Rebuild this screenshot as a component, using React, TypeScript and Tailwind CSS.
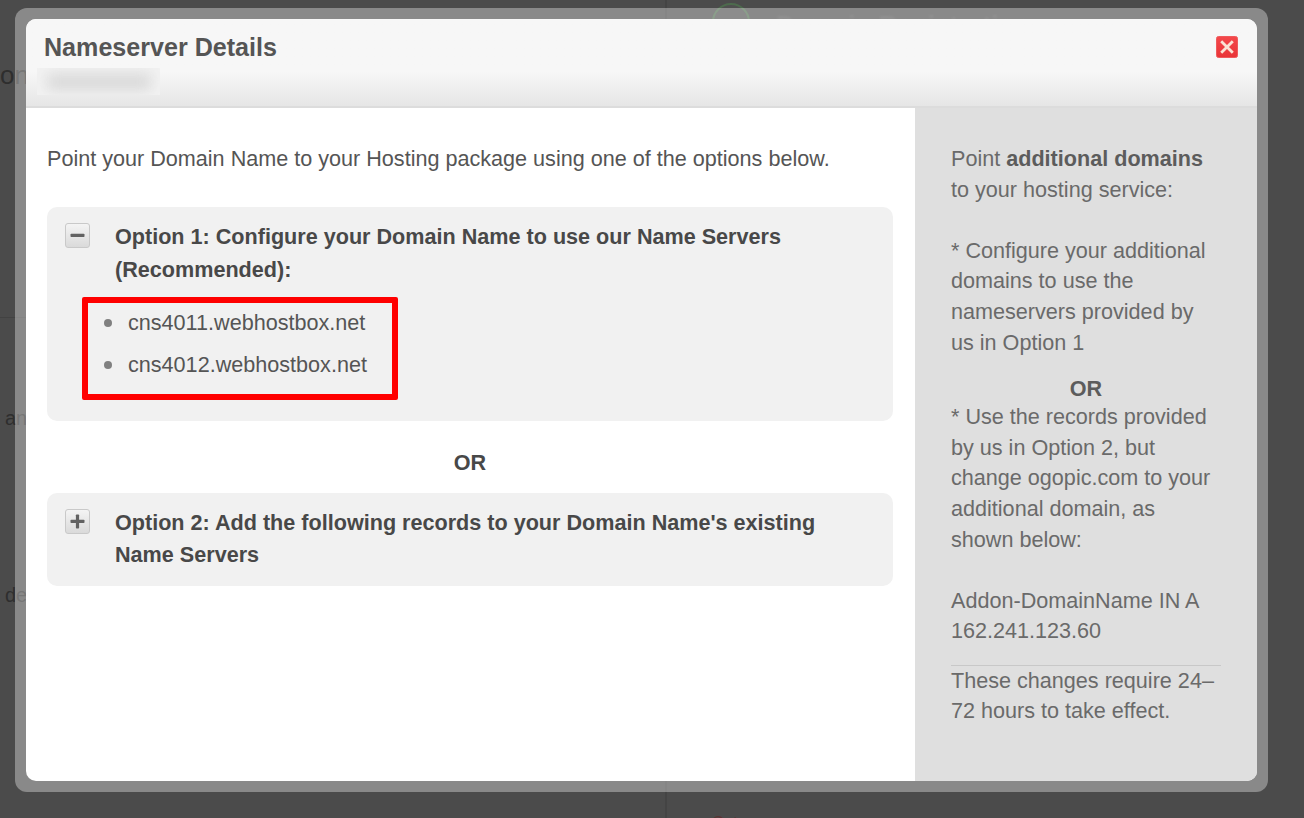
import React from 'react';

const font = { sans: "font-['Liberation_Sans',Arial,sans-serif]" };

function BackgroundPage() {
  return (
    <div className="flex h-[818px] w-full overflow-hidden bg-[#4b4b4b] text-[20px] text-[#2e2e2e]">
      <div className="flex w-[667px] flex-col border-r-2 border-[#444444]">
        <div className="h-[318px] border-b border-[#424242] pt-[61px]">
          <p className="text-[26px] leading-[28px]">on</p>
        </div>
        <p className="mt-[86px] pl-[5px] leading-[28px]">an</p>
        <p className="mt-[149px] pl-[5px] leading-[28px]">de</p>
      </div>
      <div className="flex flex-1 flex-col justify-between pl-[45px]">
        <div className="flex items-start gap-[26px]">
          <div className="mt-[3px] h-[38px] w-[38px] rounded-full border-2 border-[#4d6b4d] bg-[#4f4f4f]" />
          <p className="mt-[10px] text-[26px] font-bold leading-[30px] text-[#555555] blur-[1px]">Domain Registration</p>
        </div>
        <p className="-mb-[13px] text-[16px] leading-[16px] text-[#5a3434]">Get</p>
      </div>
    </div>
  );
}

function ToggleBox({ sign }: { sign: 'minus' | 'plus' }) {
  return (
    <div className="flex h-[25px] w-[25px] shrink-0 items-center justify-center rounded-[3px] border border-[#c9c9c9] bg-gradient-to-b from-[#f4f4f4] to-[#dadada]">
      <svg width="15" height="15" viewBox="0 0 15 15">
        <rect x="0.5" y="5.8" width="14" height="3.2" rx="0.8" fill="#626262" />
        {sign === 'plus' && <rect x="5.9" y="0.5" width="3.2" height="14" rx="0.8" fill="#626262" />}
      </svg>
    </div>
  );
}

function CloseIcon() {
  return (
    <svg width="22" height="22" viewBox="0 0 22 22">
      <defs>
        <linearGradient id="closeRed" x1="0" y1="0" x2="0" y2="1">
          <stop offset="0" stopColor="#f4484b" />
          <stop offset="1" stopColor="#e93437" />
        </linearGradient>
      </defs>
      <rect x="0.5" y="0.5" width="21" height="21" rx="2" fill="url(#closeRed)" stroke="#ef5a5c" />
      <path d="M6.2 6.2 L15.8 15.8 M15.8 6.2 L6.2 15.8" stroke="#fbe3d6" strokeWidth="2.8" strokeLinecap="square" />
    </svg>
  );
}

function Sidebar() {
  return (
    <aside className="flex w-[342px] shrink-0 flex-col bg-[#dfdfdf] pt-[36px] pr-[36px] pl-[36px] text-[21.6px] leading-[30.6px] text-[#6a6a6a]">
      <p>
        Point <b className="text-[#5c5c5c]">additional domains</b> to your hosting service:
      </p>
      <p className="mt-[30.6px]">* Configure your additional domains to use the nameservers provided by us in Option 1</p>
      <p className="mt-[16px] text-center font-bold leading-[30px] text-[#5c5c5c]">OR</p>
      <p className="-mt-[2px]">
        * Use the records provided by us in Option 2, but change ogopic.com to your additional domain, as shown below:
      </p>
      <p className="mt-[30.6px]">Addon-DomainName IN A 162.241.123.60</p>
      <p className="mt-[18px] border-t border-[#c8c8c8] leading-[30px]">These changes require 24–72 hours to take effect.</p>
    </aside>
  );
}

export default function App() {
  return (
    <div className={`relative h-[818px] w-[1304px] overflow-hidden ${font.sans}`}>
      <BackgroundPage />
      <div className="absolute top-[8px] left-[15px] h-[784px] w-[1253px] rounded-[12px] bg-white/35 p-[11px]">
        <div className="flex h-full flex-col overflow-hidden rounded-[10px] bg-white">
          <header className="relative h-[89px] shrink-0 border-b-2 border-[#dcdcdc] bg-gradient-to-b from-[#f7f7f7] from-60% to-[#e6e6e6] pt-[13px] pl-[18px]">
            <h2 className="text-[25.1px] font-bold leading-[30px] text-[#555555]">Nameserver Details</h2>
            <div className="mt-[6px] -ml-[7px] flex h-[27px] w-[123px] items-center justify-center overflow-hidden bg-[#f2f2f2]">
              <div className="h-[16px] w-[104px] bg-[#d8d8d8] blur-[7px]" />
            </div>
            <button className="absolute top-[17px] right-[19px] flex">
              <CloseIcon />
            </button>
          </header>
          <div className="flex flex-1">
            <main className="flex-1 pt-[36px] pr-[22px] pl-[21px]">
              <p className="text-[21.6px] leading-[30px] text-[#555555]">
                Point your Domain Name to your Hosting package using one of the options below.
              </p>
              <section className="mt-[33px] rounded-[10px] bg-[#f1f1f1] pt-[14px] pr-[18px] pb-[21px] pl-[18px]">
                <div className="flex gap-[25px]">
                  <div className="pt-[2px]">
                    <ToggleBox sign="minus" />
                  </div>
                  <h3 className="text-[21.6px] font-bold leading-[32.5px] text-[#484848]">
                    Option 1: Configure your Domain Name to use our Name Servers (Recommended):
                  </h3>
                </div>
                <ul className="mt-[11px] ml-[17px] flex w-[316px] flex-col gap-[4px] rounded-[2px] border-[6.5px] border-[#ff0000] pt-[1px] pb-[10px] pl-[16px]">
                  <li className="flex h-[38px] items-center gap-[16px] text-[21.6px] text-[#555555]">
                    <span className="h-[8px] w-[8px] rounded-full bg-[#808080]" />
                    cns4011.webhostbox.net
                  </li>
                  <li className="flex h-[38px] items-center gap-[16px] text-[21.6px] text-[#555555]">
                    <span className="h-[8px] w-[8px] rounded-full bg-[#808080]" />
                    cns4012.webhostbox.net
                  </li>
                </ul>
              </section>
              <p className="mt-[27px] text-center text-[21.6px] font-bold leading-[30px] text-[#484848]">OR</p>
              <section className="mt-[15px] rounded-[10px] bg-[#f1f1f1] pt-[14px] pr-[18px] pb-[15px] pl-[18px]">
                <div className="flex gap-[25px]">
                  <div className="pt-[2px]">
                    <ToggleBox sign="plus" />
                  </div>
                  <h3 className="text-[21.6px] font-bold leading-[32px] text-[#484848]">
                    Option 2: Add the following records to your Domain Name's existing Name Servers
                  </h3>
                </div>
              </section>
            </main>
            <Sidebar />
          </div>
        </div>
      </div>
    </div>
  );
}
